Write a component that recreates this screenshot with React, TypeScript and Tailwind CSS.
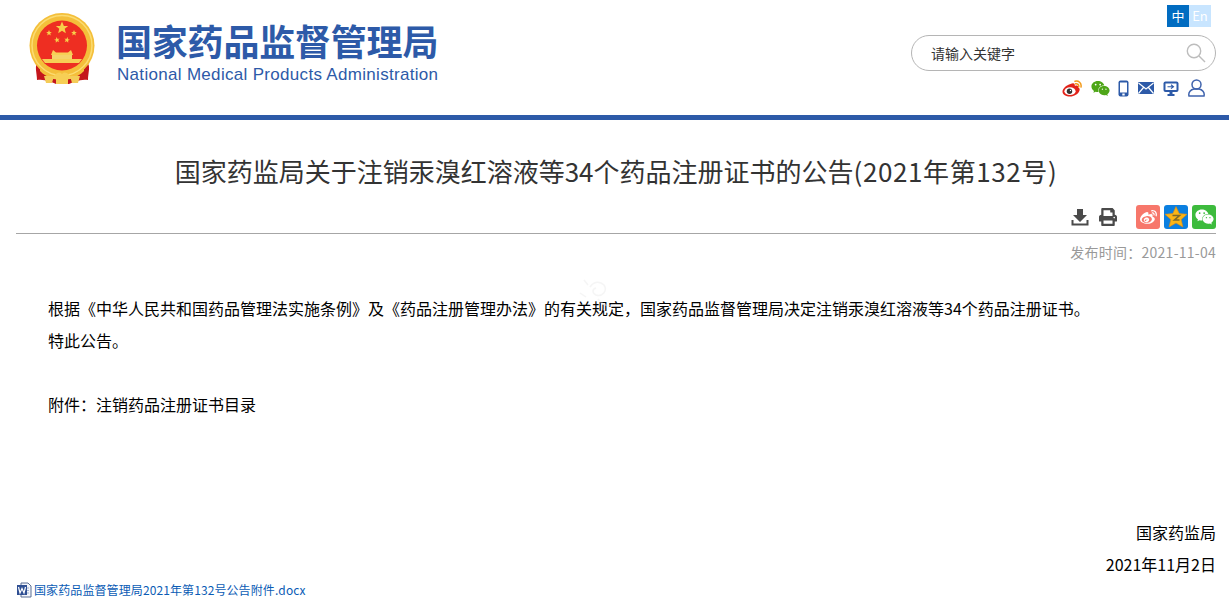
import { FaWeibo, FaWeixin, FaPrint } from 'react-icons/fa'

const cjk = "font-['Microsoft_YaHei','Noto_Sans_CJK_SC','Noto_Sans',sans-serif]"

const smallStars = [
  [20, 20, 0],
  [45, 20, 0],
  [28, 27, -12],
  [38, 27, 12],
]

const starPath = 'M0 -1 L0.29 -0.31 L0.95 -0.31 L0.42 0.12 L0.59 0.81 L0 0.42 L-0.59 0.81 L-0.42 0.12 L-0.95 -0.31 L-0.29 -0.31 Z'

// national emblem, simplified
const Emblem = () => (
  <svg width="67" height="71" viewBox="0 0 67 71">
    <path d="M9 50 C5 52 8 60 8 67 C16 66 22 69 27 71 L40 71 C45 69 51 66 59 67 C59 60 62 52 58 50 Z" fill="#c4161c" />
    <circle cx="33" cy="32.5" r="32.5" fill="#f4bf3a" />
    <circle cx="33" cy="32.5" r="30" fill="none" stroke="#fbdc72" strokeWidth="1.5" />
    <circle cx="33" cy="32.5" r="25" fill="#ee2e22" />
    <path d={starPath} transform="translate(33 15) scale(6.5)" fill="#f7cf4a" />
    {smallStars.map(([x, y, r]) => (
      <path key={`${x}-${y}`} d={starPath} transform={`translate(${x} ${y}) rotate(${r}) scale(3)`} fill="#f7cf4a" />
    ))}
    <path d="M24 37 L27 39.5 H39 L42 37 L44 42 H22 Z" fill="#f7cf55" />
    <rect x="23" y="42" width="20" height="4" fill="#f4d36a" />
    <path d="M13 46 H53 L50 50 H16 Z" fill="#f7cf55" />
    <path d="M11 54 C18 61 26 64 33 64 C40 64 48 61 55 54 L55 58 C48 65 40 67 33 67 C26 67 18 65 11 58 Z" fill="#f4bf3a" />
    <path d="M23 66 C26 60 30 58 33 61 C36 58 40 60 43 66 L39 66 L39 71 H27 L27 66 Z" fill="#f7cf55" />
    <path d="M15 63 H25 L23 70 H17 Z M41 63 H51 L49 70 H43 Z" fill="#f4cc58" />
  </svg>
)

const WeiboColor = () => (
  <svg width="20" height="17" viewBox="0 0 20 17">
    <path d="M8.5 4 C10.5 3 12 3 12.5 4 C13 5 12.8 5.7 13 5.9 C14.5 5.3 16.5 5.6 16.3 7.5 C17.5 8 18 9 17.5 10.5 C16.5 14 12 16.5 8 16.5 C4 16.5 0.5 14.7 0.5 11.5 C0.5 8.7 4.5 5 8.5 4 Z" fill="#e2231a" />
    <ellipse cx="8" cy="11.2" rx="5.6" ry="3.9" fill="#fff" />
    <circle cx="7.5" cy="11.3" r="2.7" fill="#333" />
    <circle cx="8.5" cy="10.5" r="0.7" fill="#fff" />
    <path d="M13 1.3 C16.5 0.3 19.8 3 19 7 M13.5 3.8 C15.5 3.3 17.2 4.8 16.7 6.8" fill="none" stroke="#f39a19" strokeWidth="1.5" strokeLinecap="round" />
  </svg>
)

const DownloadIcon = () => (
  <svg width="18" height="18" viewBox="0 0 18 18" fill="#4a4a4a">
    <path d="M6 1 H12 V7 H16 L9 14 L2 7 H6 Z" />
    <path d="M0.5 12 H2.5 V15.5 H15.5 V12 H17.5 V17.5 H0.5 Z" />
  </svg>
)

const StarBox = () => (
  <svg width="24" height="24" viewBox="0 0 24 24" className="rounded-[3px]">
    <rect width="24" height="24" fill="#0b7fe0" />
    <path d="M12 1.5 L15.2 8.5 L23 9.3 L17.2 14.4 L18.9 22 L12 18.1 L5.1 22 L6.8 14.4 L1 9.3 L8.8 8.5 Z" fill="#fbb516" stroke="#e28a10" strokeWidth="0.6" />
    <path d="M8.5 10.5 H15.5 L10.5 15 H15.5" fill="none" stroke="#7c6a2a" strokeWidth="1.6" />
  </svg>
)

const WordIcon = () => (
  <svg width="16" height="16" viewBox="0 0 16 16">
    <path d="M5 1 H12 L15 4 V15 H5 Z" fill="#f3f5fa" stroke="#5b6f94" />
    <path d="M7 6 H13 M7 8.5 H13 M7 11 H13" stroke="#9db1d2" />
    <rect x="1" y="3" width="10" height="10" fill="#2f4f93" />
    <path d="M2.5 5 L4 11 L6 6.5 L8 11 L9.5 5" fill="none" stroke="#fff" strokeWidth="1.2" />
  </svg>
)

const PhoneIcon = () => (
  <svg width="11" height="17" viewBox="0 0 11 17">
    <rect x="0.5" y="0.5" width="10" height="16" rx="2" fill="#2d5aa8" />
    <rect x="2" y="2.5" width="7" height="10" fill="#fff" />
    <rect x="4.3" y="13.5" width="2.4" height="2" fill="#fff" />
  </svg>
)

const MailIcon = () => (
  <svg width="16" height="12" viewBox="0 0 16 12">
    <rect width="16" height="12" rx="1" fill="#2d5aa8" />
    <path d="M0.5 1 L8 7 L15.5 1 M0.5 11.5 L5.5 5.5 M15.5 11.5 L10.5 5.5" fill="none" stroke="#fff" strokeWidth="1.2" />
  </svg>
)

const ScreenIcon = () => (
  <svg width="16" height="15" viewBox="0 0 16 15">
    <rect x="0.5" y="0.5" width="15" height="10.5" rx="2" fill="#2d5aa8" />
    <rect x="2.5" y="2.5" width="11" height="6.5" fill="#fff" />
    <path d="M4.5 5.7 H10 M8 3.8 L10.5 5.7 L8 7.6" fill="none" stroke="#2d5aa8" strokeWidth="1.1" />
    <rect x="6.5" y="11" width="3" height="2" fill="#2d5aa8" />
    <rect x="4.5" y="13" width="7" height="2" fill="#2d5aa8" />
  </svg>
)

const UserIcon = () => (
  <svg width="17" height="18" viewBox="0 0 17 18" fill="none" stroke="#3f63ad" strokeWidth="1.5">
    <circle cx="8.5" cy="5.5" r="4.5" />
    <path d="M1 17 C0 13 3 10.5 6 10 H11 C14 10.5 17 13 16 17 Z" />
  </svg>
)

export default function App() {
  return (
    <div className={`${cjk} w-full bg-white text-[#222]`}>
      <header className="h-[120px] border-b-[5px] border-[#2d5aa8] flex justify-between">
        <div className="flex pl-[29px] pt-[13px]">
          <Emblem />
          <div className="ml-[21px] pt-[5px]">
            <div className="text-[36px] leading-[44px] font-bold text-[#2d5aa8] whitespace-nowrap tracking-[-0.2px] -ml-[1px]">国家药品监督管理局</div>
            <div className="font-['Liberation_Sans',sans-serif] text-[17px] leading-[20px] mt-[3px] text-[#2d5aa8] tracking-[0.31px] whitespace-nowrap">National Medical Products Administration</div>
          </div>
        </div>
        <div className="flex flex-col items-end pr-[13px] pt-[5px]">
          <div className="flex mr-[5px] text-[13px] leading-[22px] text-center text-white">
            <span className="w-[22px] h-[22px] bg-[#016cc1]">中</span>
            <span className="w-[22px] h-[22px] bg-[#c8e5ff]">En</span>
          </div>
          <div className="mt-[8px] w-[305px] h-[36px] rounded-[18px] border border-[#b5b5b5] flex items-center justify-between pl-[19px] pr-[9px]">
            <span className="text-[14px] text-[#333]">请输入关键字</span>
            <svg width="20" height="20" viewBox="0 0 20 20" fill="none" stroke="#bdbdbd" strokeWidth="1.4">
              <circle cx="8" cy="8" r="6.7" />
              <path d="M13 13 L19 19" />
            </svg>
          </div>
          <div className="mt-[8px] mr-[11px] flex items-center h-[18px] gap-[9px]">
            <WeiboColor />
            <FaWeixin className="w-[19px] h-[17px] text-[#4ea618] -ml-[1px] translate-x-[1px]" />
            <PhoneIcon />
            <MailIcon />
            <ScreenIcon />
            <span><UserIcon /></span>
          </div>
        </div>
      </header>

      <main className="relative pl-[16px] pr-[13px]">
        <h1 className="text-[26px] leading-[36px] pt-[33px] text-center font-normal text-[#333]">
          国家药监局关于注销汞溴红溶液等34个药品注册证书的公告<span className="tracking-[0.6px]">(2021年第132号)</span>
        </h1>
        <div className="mt-[16px] h-[29px] border-b border-[#a6a6a6] flex justify-end items-start gap-[10px] pt-[3px]">
          <DownloadIcon />
          <FaPrint className="w-[18px] h-[18px] text-[#4a4a4a] mr-[9px]" />
          <div className="flex gap-[4px] -mt-[3px]">
            <span className="w-[24px] h-[24px] rounded-[3px] bg-[#f7776b] flex items-center justify-center">
              <FaWeibo className="w-[19px] h-[17px] text-white" />
            </span>
            <StarBox />
            <span className="w-[24px] h-[24px] rounded-[3px] bg-[#3dbb3d] flex items-center justify-center">
              <FaWeixin className="w-[19px] h-[18px] text-white" />
            </span>
          </div>
        </div>
        <div className="mt-[8px] text-right text-[14px] leading-[20px] text-[#999] tracking-[0.26px]">发布时间：2021-11-04</div>

        <svg className="absolute left-[578px] top-[157px] opacity-40" width="40" height="38" viewBox="0 0 40 38" fill="none" stroke="#e8e8e8" strokeWidth="1.5">
          <path d="M12 10 C16 4 22 4 26 8 C30 14 24 20 18 18 C14 16 14 12 18 11 M8 20 L2 16 M10 8 L6 3 M20 22 C24 28 30 30 38 28" />
        </svg>

        <article className="text-[16px] leading-[32px] text-black mt-[30px]">
          <p className="indent-[32px]">根据《中华人民共和国药品管理法实施条例》及《药品注册管理办法》的有关规定，国家药品监督管理局决定注销汞溴红溶液等34个药品注册证书。</p>
          <p className="indent-[32px]">特此公告。</p>
          <p className="h-[32px]"></p>
          <p className="indent-[32px]">附件：注销药品注册证书目录</p>
          <div className="h-[96px]"></div>
          <p className="text-right">国家药监局</p>
          <p className="text-right">2021年11月2日</p>
        </article>
        <div className="flex items-center gap-[2px] text-[12px] leading-[20px] text-[#0b5cb5] tracking-[0.1px]">
          <WordIcon />
          <span>国家药品监督管理局2021年第132号公告附件.docx</span>
        </div>
      </main>
    </div>
  )
}
